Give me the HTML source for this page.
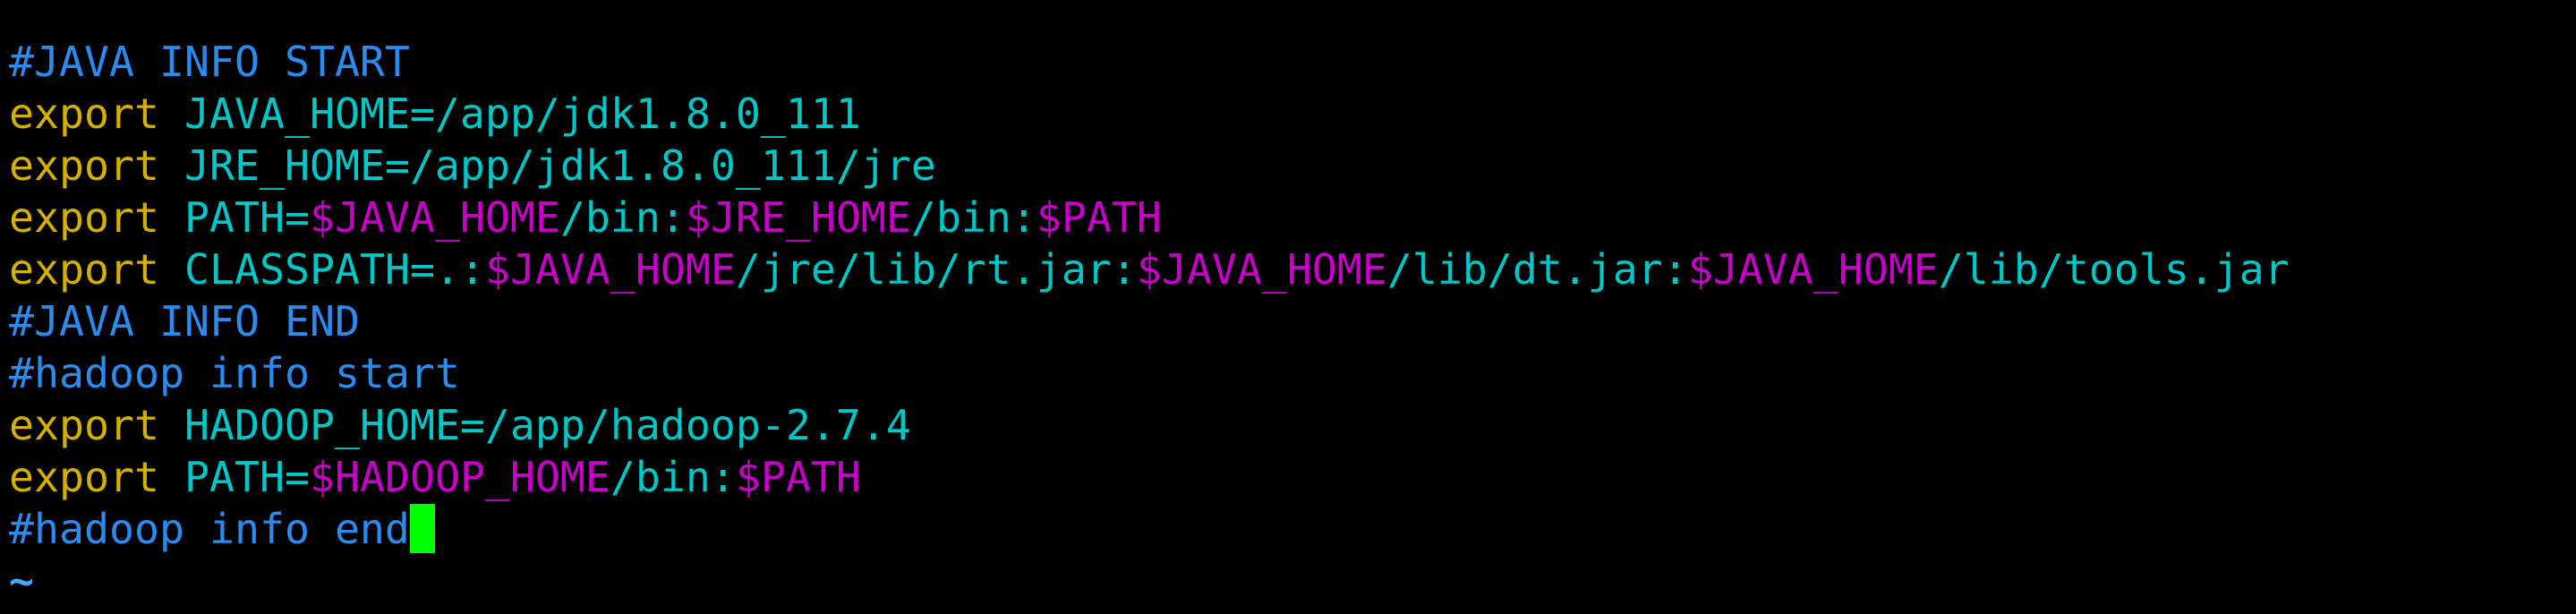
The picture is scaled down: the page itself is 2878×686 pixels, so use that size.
<!DOCTYPE html>
<html><head><meta charset="utf-8"><style>
html,body{margin:0;padding:0;background:#000;width:2878px;height:686px;overflow:hidden}
pre{position:absolute;left:10px;top:40px;margin:0;font-family:"DejaVu Sans Mono","Liberation Mono",monospace;font-size:46.5px;line-height:58px;color:#00c8c8;white-space:pre}
.c{color:#2a8cf0}.y{color:#d4b000}.m{color:#c800c8}
.cur{background:#00ff00;display:inline-block;width:28px;height:55px;vertical-align:top;margin-top:1px}
.t{color:#40a8ff;font-weight:bold}
</style></head><body><pre><span class="c">#JAVA INFO START</span>
<span class="y">export</span> JAVA_HOME=/app/jdk1.8.0_111
<span class="y">export</span> JRE_HOME=/app/jdk1.8.0_111/jre
<span class="y">export</span> PATH=<span class="m">$JAVA_HOME</span>/bin:<span class="m">$JRE_HOME</span>/bin:<span class="m">$PATH</span>
<span class="y">export</span> CLASSPATH=.:<span class="m">$JAVA_HOME</span>/jre/lib/rt.jar:<span class="m">$JAVA_HOME</span>/lib/dt.jar:<span class="m">$JAVA_HOME</span>/lib/tools.jar
<span class="c">#JAVA INFO END</span>
<span class="c">#hadoop info start</span>
<span class="y">export</span> HADOOP_HOME=/app/hadoop-2.7.4
<span class="y">export</span> PATH=<span class="m">$HADOOP_HOME</span>/bin:<span class="m">$PATH</span>
<span class="c">#hadoop info end</span><span class="cur"></span>
<span class="t">~</span></pre></body></html>
